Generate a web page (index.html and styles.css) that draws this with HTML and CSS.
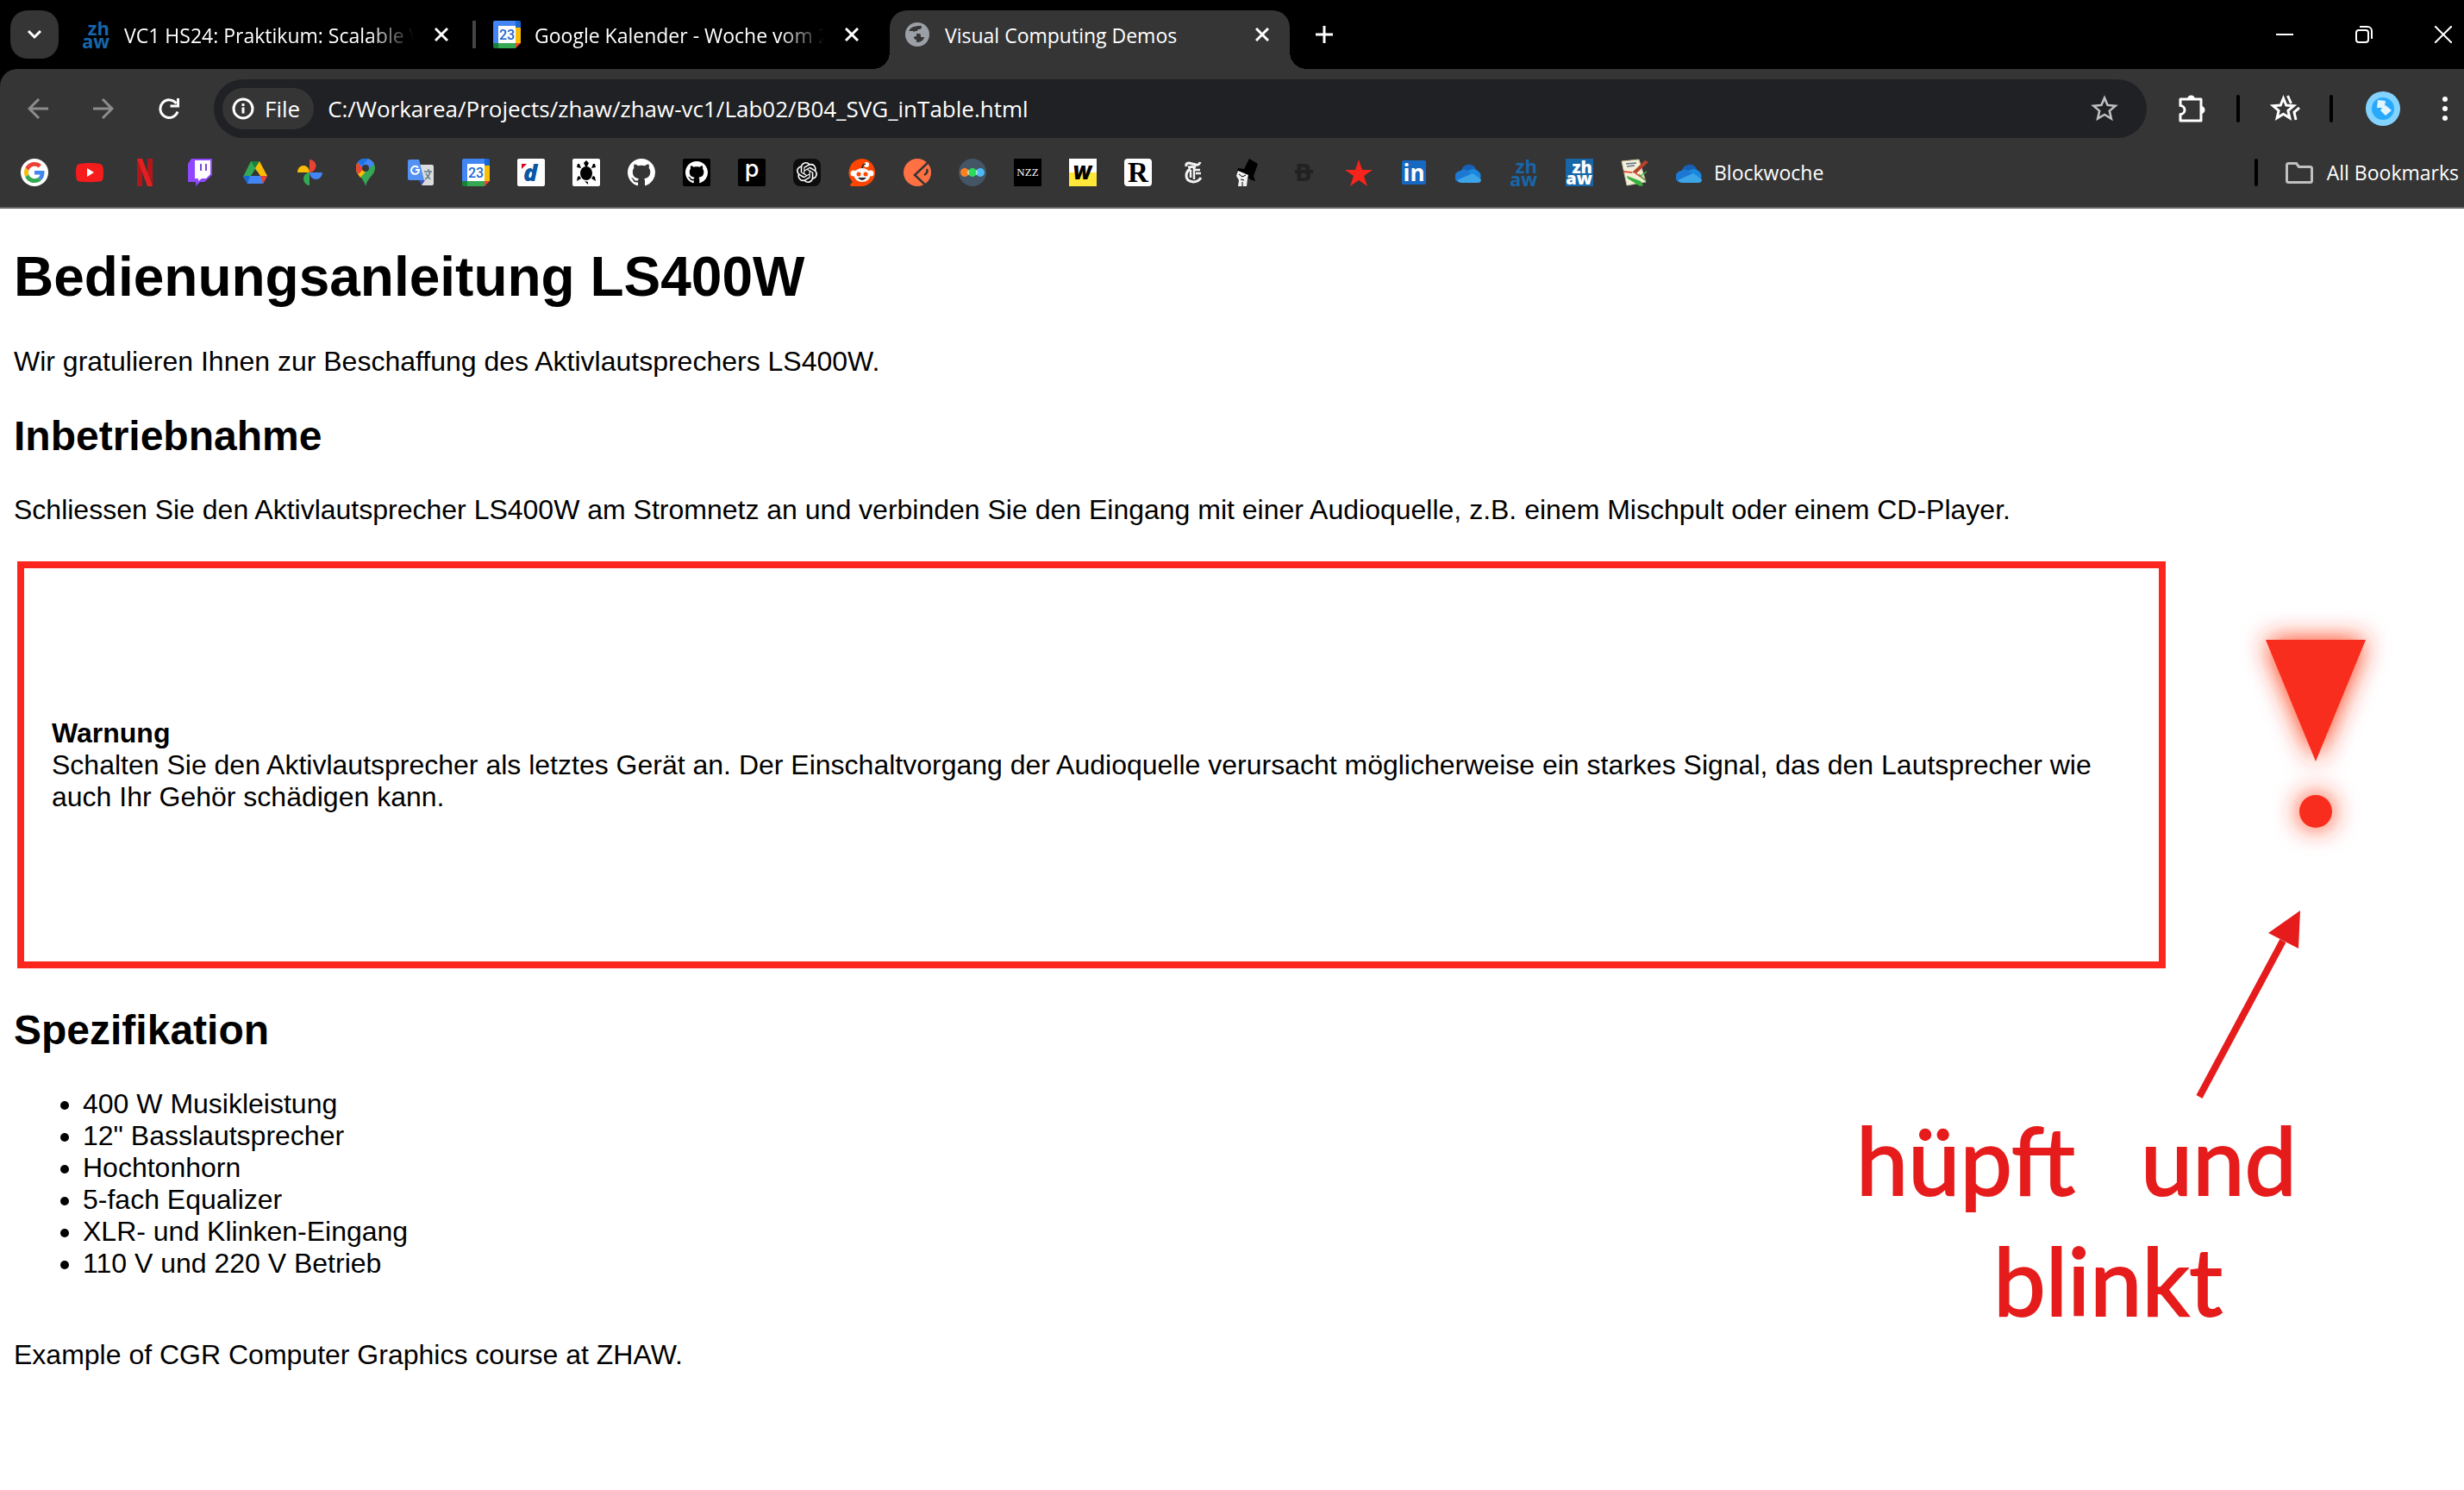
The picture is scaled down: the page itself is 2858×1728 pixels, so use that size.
FILE: index.html
```html
<!DOCTYPE html>
<html lang="de">
<head>
<meta charset="utf-8">
<title>Visual Computing Demos</title>
<link rel="stylesheet" href="styles.css">
</head>
<body>
<svg class="defs" aria-hidden="true">
  <defs>
    <symbol id="close" viewBox="0 0 16 16"><path d="M1 1l14 14M15 1L1 15" fill="none" stroke="#fff" stroke-width="3"/></symbol>
    <symbol id="calendar" viewBox="0 0 32 32">
      <path d="M2 0h24v8H8v18H0V2a2 2 0 012-2z" fill="#4285f4"/>
      <path d="M26 0h4a2 2 0 012 2v6h-6z" fill="#1967d2"/>
      <path d="M26 8h6v18h-6z" fill="#fbbc04"/>
      <path d="M6 26h20v6H6z" fill="#34a853"/>
      <path d="M0 26h6v6H2a2 2 0 01-2-2z" fill="#188038"/>
      <path d="M26 26h6l-6 6z" fill="#ea4335"/>
      <path d="M6 6h20v20H6z" fill="#fff"/>
      <text x="16" y="22" text-anchor="middle" font-family="Roboto, sans-serif" font-weight="500" font-size="16" fill="#1967d2">23</text>
    </symbol>
    <symbol id="zhaw" viewBox="0 0 32 32">
      <g font-family="Open Sans, sans-serif" font-weight="700" font-size="22" fill="#1766a8">
        <text x="31" y="17" text-anchor="end">zh</text>
        <text x="31" y="32" text-anchor="end">aw</text>
      </g>
    </symbol>
    <symbol id="onedrive" viewBox="0 0 32 32">
      <path d="M7 14a9 9 0 0117-2l-5 8z" fill="#1560b5"/>
      <path d="M7 28a7 7 0 01-1-14 7 7 0 018 0l9 6-12 8z" fill="#1d78d3"/>
      <path d="M14 14l3-1a8 8 0 0110 2 6.500 6.500 0 01-1 11z" fill="#1987df"/>
      <path d="M2 25l18-8 10 7a4 4 0 01-4 4H7a7 7 0 01-5-3z" fill="#3ba5e8"/>
    </symbol>
    <symbol id="octocat" viewBox="0 0 16 16"><path fill="#fff" d="M8 0C3.580 0 0 3.580 0 8c0 3.540 2.290 6.530 5.470 7.590.4.070.55-.17.55-.38 0-.19-.01-.82-.01-1.490-2.010.37-2.530-.49-2.690-.94-.09-.23-.48-.94-.82-1.130-.28-.15-.68-.52-.01-.53.63-.01 1.080.58 1.230.82.72 1.210 1.870.87 2.330.66.07-.52.28-.87.51-1.070-1.780-.2-3.640-.89-3.640-3.950 0-.87.31-1.590.82-2.150-.08-.2-.36-1.020.08-2.120 0 0 .67-.21 2.200.82.64-.18 1.320-.27 2-.27.68 0 1.360.09 2 .27 1.530-1.040 2.200-.82 2.200-.82.44 1.100.16 1.920.08 2.120.51.56.82 1.270.82 2.150 0 3.070-1.870 3.750-3.650 3.950.29.25.54.73.54 1.480 0 1.070-.01 1.930-.01 2.200 0 .21.15.46.55.38A8.013 8.013 0 0016 8c0-4.420-3.580-8-8-8z"/></symbol>
  </defs>
</svg>

<header class="browser">
  <div class="tabstrip">
    <button class="tab-search" aria-label="Search tabs"><svg width="20" height="12" viewBox="0 0 20 12"><path d="M3 2l7 7 7-7" fill="none" stroke="#fff" stroke-width="3"/></svg></button>
    <div class="tab">
      <svg class="icon" viewBox="0 0 32 32"><use href="#zhaw"/></svg>
      <span class="tab-title faded">VC1 HS24: Praktikum: Scalable V</span>
      <button class="tab-close" aria-label="Close tab"><svg width="16" height="16"><use href="#close"/></svg></button>
    </div>
    <span class="tab-gap line"></span>
    <div class="tab">
      <svg class="icon" viewBox="0 0 32 32"><use href="#calendar"/></svg>
      <span class="tab-title faded">Google Kalender - Woche vom 2</span>
      <button class="tab-close" aria-label="Close tab"><svg width="16" height="16"><use href="#close"/></svg></button>
    </div>
    <span class="tab-gap"></span>
    <div class="tab active">
      <svg class="icon" viewBox="0 0 32 32"><circle cx="16" cy="16" r="14" fill="#9aa0a6"/><path d="M17 6h4c0 3-1 4-3 4-1 0-2 0-2 2h-3v3h5c2 0 2 1 2 4h3c1 0 1 1 1 1-2 4-5 5-9 5v-3c-2 0-3-1-3-3v-2H5c0-5 3-9 7-10 2 0 3-1 5-1z" fill="#353535"/><path d="M5 12h6l4 3v3l-5 1-5-2z" fill="#9aa0a6"/></svg>
      <span class="tab-title">Visual Computing Demos</span>
      <button class="tab-close" aria-label="Close tab"><svg width="16" height="16"><use href="#close"/></svg></button>
    </div>
    <button class="new-tab" aria-label="New tab"><svg width="20" height="20"><path d="M10 0v20M0 10h20" stroke="#fff" stroke-width="3"/></svg></button>
    <div class="window-controls">
      <button aria-label="Minimize"><svg width="20" height="20"><path d="M0 10h20" stroke="#fff" stroke-width="2"/></svg></button>
      <button aria-label="Restore"><svg width="20" height="20" fill="none" stroke="#fff" stroke-width="2"><rect x="1" y="5" width="14" height="14" rx="3"/><path d="M5 1h9a5 5 0 015 5v9"/></svg></button>
      <button aria-label="Close"><svg width="20" height="20"><path d="M0 0l20 20M20 0L0 20" stroke="#fff" stroke-width="2"/></svg></button>
    </div>
  </div>

  <div class="toolbar">
    <div class="nav">
      <button aria-label="Back"><svg width="24" height="24" fill="none" stroke="#8c8c8c" stroke-width="3"><path d="M24 12H2M13 1L2 12l11 11"/></svg></button>
      <button aria-label="Forward"><svg width="24" height="24" fill="none" stroke="#8c8c8c" stroke-width="3"><path d="M0 12h22M11 1l11 11-11 11"/></svg></button>
      <button aria-label="Reload"><svg width="24" height="24" fill="none" stroke="#fff" stroke-width="3"><path d="M22 15.500A10.300 10.300 0 1120.500 6M22.500 0v9h-9"/></svg></button>
    </div>
    <form class="omnibox">
      <button type="button" class="chip"><svg width="26" height="26" fill="none" stroke="#fff" stroke-width="3"><circle cx="13" cy="13" r="11"/><path d="M13 11.500v7M13 7v3"/></svg>File</button>
      <input class="url" type="text" aria-label="Address" value="C:/Workarea/Projects/zhaw/zhaw-vc1/Lab02/B04_SVG_inTable.html">
      <button type="button" class="star" aria-label="Bookmark this page"><svg width="38" height="38" viewBox="0 0 24 24"><path fill="#c0c0c0" d="M22 9.240l-7.190-.62L12 2 9.190 8.630 2 9.240l5.460 4.730L5.820 21 12 17.270 18.180 21l-1.630-7.030L22 9.240zM12 15.400l-3.760 2.270 1-4.280-3.320-2.880 4.380-.38L12 6.100l1.710 4.040 4.380.38-3.320 2.880 1 4.280L12 15.400z"/></svg></button>
    </form>
    <div class="actions">
      <button aria-label="Extensions"><svg width="36" height="36"><path d="M5 7h24v25H5v-7.500a5 5 0 000-10z" fill="none" stroke="#fff" stroke-width="3" stroke-linejoin="round"/><path d="M13 7a4.500 4.500 0 019 0zM29 15a4.500 4.500 0 010 9z" fill="#fff"/></svg></button>
      <span class="divider"></span>
      <button aria-label="Bookmarks"><svg width="36" height="36" fill="none" stroke="#fff" stroke-width="3"><path d="M16.500 6l3.300 8 8.700.7-6.600 5.600 2 8.500-7.400-4.500-7.400 4.500 2-8.500-6.600-5.600 8.700-.7z"/><path d="M21.500 3l4 9M35 17l-6 5 2 9"/></svg></button>
      <span class="divider"></span>
      <button class="profile" aria-label="Profile"><svg width="40" height="40"><circle cx="20" cy="20" r="20" fill="#82d3ff"/><circle cx="20" cy="20" r="13" fill="#29a9fb"/><path d="M14 10l9 1-1 6 1-1 7 6-7 6-6-6 2-3h-6z" fill="#e2f4fd"/></svg></button>
      <button class="menu" aria-label="Menu"><svg width="8" height="30" fill="#fff"><circle cx="4" cy="4" r="3"/><circle cx="4" cy="15" r="3"/><circle cx="4" cy="26" r="3"/></svg></button>
    </div>
  </div>

  <nav class="bookmarks" aria-label="Bookmarks">
    <a href="#" aria-label="Google"><svg class="icon" viewBox="0 0 32 32"><circle cx="16" cy="16" r="16" fill="#fff"/><g transform="translate(4 4) scale(.5)"><path fill="#ea4335" d="M24 9.500c3.540 0 6.710 1.220 9.210 3.600l6.850-6.850C35.900 2.380 30.470 0 24 0 14.620 0 6.510 5.380 2.560 13.220l7.980 6.190C12.430 13.720 17.740 9.500 24 9.500z"/><path fill="#4285f4" d="M46.980 24.550c0-1.570-.15-3.090-.38-4.550H24v9.020h12.940c-.58 2.960-2.260 5.480-4.780 7.180l7.730 6c4.510-4.180 7.090-10.360 7.090-17.650z"/><path fill="#fbbc05" d="M10.530 28.590c-.48-1.450-.76-2.990-.76-4.590s.27-3.140.76-4.590l-7.980-6.190C.92 16.460 0 20.120 0 24c0 3.880.92 7.540 2.560 10.780l7.970-6.190z"/><path fill="#34a853" d="M24 48c6.480 0 11.930-2.130 15.890-5.810l-7.730-6c-2.150 1.450-4.920 2.300-8.160 2.300-6.260 0-11.570-4.220-13.470-9.910l-7.980 6.190C6.510 42.620 14.620 48 24 48z"/></g></svg></a>
    <a href="#" aria-label="YouTube"><svg class="icon" viewBox="0 0 32 32"><path d="M4 6q12-2 24 0 3 1 3.500 4 1 6 0 13-.5 3-3.500 3.500-12 1.500-24 0-3-.5-3.500-3.500-1-7 0-13Q1 6.500 4 6z" fill="#f61c1c"/><path d="M13 11v10l8-5z" fill="#fff"/></svg></a>
    <a href="#" aria-label="Netflix"><svg class="icon" viewBox="0 0 32 32"><path d="M7 0h6v32H7zM19 0h6v32h-6z" fill="#b1161b"/><path d="M7 0h6l12 32h-6z" fill="#e22020"/></svg></a>
    <a href="#" aria-label="Twitch"><svg class="icon" viewBox="0 0 32 32"><path d="M6 0h24v19l-9 8h-5l-5 5v-5H2V6z" fill="#9146ff"/><path d="M10 2h18v16l-5 5h-5l-4 3v-3h-4z" fill="#fff"/><path d="M16 6h2v8h-2zM22 6h2v8h-2z" fill="#7b4bd0"/></svg></a>
    <a href="#" aria-label="Drive"><svg class="icon" viewBox="0 0 32 32"><path d="M11 3h5l4 8-9 15-3 3-6-8z" fill="#34a853"/><path d="M11 3h10l-5 8z" fill="#188038"/><path d="M16 11l5-8 9 17h-8z" fill="#fbbc04"/><path d="M2 20h28l-5 9H7z" fill="#4285f4"/><path d="M2 20h8l-3 9z" fill="#1967d2"/><path d="M22 20h8l-5 9z" fill="#ea4335"/><path d="M16 12l5 8H11z" fill="#353535"/></svg></a>
    <a href="#" aria-label="Photos"><svg class="icon" viewBox="0 0 32 32"><path d="M15 16V1a7.500 7.500 0 010 15z" fill="#ea4335"/><path d="M15 16H1a7 8 0 0114 0z" fill="#fbbc04"/><path d="M15 16v15a7 7.500 0 010-15z" fill="#34a853"/><path d="M15 16h15a7.500 8 0 01-15 0z" fill="#4285f4"/></svg></a>
    <a href="#" aria-label="Maps"><svg class="icon" viewBox="0 0 32 32"><path d="M16 0C9 0 5 5 5 11c0 8 9 11 11 21 2-10 11-13 11-21 0-6-5-11-11-11z" fill="#34a853"/><path d="M5 11c0 5 3 8 5 11L25 5c-1-2-4-5-9-5C9 0 5 5 5 11z" fill="#fbbc04"/><path d="M5 11c0-3 1-5 2-7l8 6-7 8c-2-2-3-4-3-7z" fill="#ea4335"/><path d="M7 4c3-4 7-4 9-4 4 0 8 2 10 6L16 16z" fill="#4285f4"/><path d="M7 4l5 4 7-8C14-1 9 1 7 4z" fill="#1a73e8"/><circle cx="16" cy="11" r="4" fill="#353535"/></svg></a>
    <a href="#" aria-label="Translate"><svg class="icon" viewBox="0 0 32 32"><path d="M14 7h15a2 2 0 012 2v20a2 2 0 01-2 2H17z" fill="#dcdcdc"/><path d="M3 1h11l6 24H3a2 2 0 01-2-2V3a2 2 0 012-2z" fill="#5491f5"/><path d="M14 25h7l-4 6z" fill="#3f51b5"/><path d="M20 15h9M25 12v3M27 15q-2 7-6 9M22 17q2 4 5 7" fill="none" stroke="#607d8b" stroke-width="1.500"/><path d="M13 10.500A4.500 4.500 0 1014 13h-4" fill="none" stroke="#fff" stroke-width="2"/></svg></a>
    <a href="#" aria-label="Calendar"><svg class="icon" viewBox="0 0 32 32"><use href="#calendar"/></svg></a>
    <a href="#" aria-label="Digitec"><svg class="icon" viewBox="0 0 32 32"><rect width="32" height="32" rx="2" fill="#fff"/><path d="M5 6h6l-6 6z" fill="#e3001b"/><text x="7" y="26" font-family="Open Sans, sans-serif" font-weight="800" font-style="italic" font-size="27" fill="#0b57a3">d</text></svg></a>
    <a href="#" aria-label="Turtle"><svg class="icon" viewBox="0 0 32 32"><rect width="32" height="32" rx="2" fill="#fff"/><ellipse cx="16" cy="17" rx="7" ry="8" fill="#000"/><path d="M15 9l-2-4 3-3 3 3-2 4zM10 11L5 10l1-4h2zM22 11l5-1-1-4h-2zM10 23l-5 3 1-5 2-1zM22 23l5 3-1-5-2-1zM14 26l4 1v3z" fill="#000"/></svg></a>
    <a href="#" aria-label="GitHub"><svg class="icon" viewBox="0 0 32 32"><use href="#octocat" width="32" height="32"/></svg></a>
    <a href="#" aria-label="GitHub Enterprise"><svg class="icon" viewBox="0 0 32 32"><rect width="32" height="32" rx="2"/><use href="#octocat" x="3" y="3" width="26" height="26"/></svg></a>
    <a href="#" aria-label="P"><svg class="icon" viewBox="0 0 32 32"><rect width="32" height="32" rx="2"/><text x="16" y="21" text-anchor="middle" font-family="Inter, sans-serif" font-weight="500" font-size="27" fill="#fff">p</text></svg></a>
    <a href="#" aria-label="ChatGPT"><svg class="icon" viewBox="0 0 32 32"><rect width="32" height="32" rx="8" fill="#0d0d0d"/><path transform="translate(4 4)" fill="#fff" d="M22.2819 9.8211a5.9847 5.9847 0 0 0-.5157-4.9108 6.0462 6.0462 0 0 0-6.5098-2.9A6.0651 6.0651 0 0 0 4.9807 4.1818a5.9847 5.9847 0 0 0-3.9977 2.9 6.0462 6.0462 0 0 0 .7427 7.0966 5.98 5.98 0 0 0 .511 4.9107 6.051 6.051 0 0 0 6.5146 2.9001A5.9847 5.9847 0 0 0 13.2599 24a6.0557 6.0557 0 0 0 5.7718-4.2058 5.9894 5.9894 0 0 0 3.9977-2.9001 6.0557 6.0557 0 0 0-.7475-7.0729zm-9.022 12.6081a4.4755 4.4755 0 0 1-2.8764-1.0408l.1419-.0804 4.7783-2.7582a.7948.7948 0 0 0 .3927-.6813v-6.7369l2.02 1.1686a.071.071 0 0 1 .038.052v5.5826a4.504 4.504 0 0 1-4.4945 4.4944zm-9.6607-4.1254a4.4708 4.4708 0 0 1-.5346-3.0137l.142.0852 4.783 2.7582a.7712.7712 0 0 0 .7806 0l5.8428-3.3685v2.3324a.0804.0804 0 0 1-.0332.0615L9.74 19.9502a4.4992 4.4992 0 0 1-6.1408-1.6464zM2.3408 7.8956a4.485 4.485 0 0 1 2.3655-1.9728V11.6a.7664.7664 0 0 0 .3879.6765l5.8144 3.3543-2.0201 1.1685a.0757.0757 0 0 1-.071 0l-4.8303-2.7865A4.504 4.504 0 0 1 2.3408 7.872zm16.5963 3.8558L13.1038 8.364 15.1192 7.2a.0757.0757 0 0 1 .071 0l4.8303 2.7913a4.4944 4.4944 0 0 1-.6765 8.1042v-5.6772a.79.79 0 0 0-.407-.667zm2.0107-3.0231l-.142-.0852-4.7735-2.7818a.7759.7759 0 0 0-.7854 0L9.409 9.2297V6.8974a.0662.0662 0 0 1 .0284-.0615l4.8303-2.7866a4.4992 4.4992 0 0 1 6.6802 4.66zM8.3065 12.863l-2.02-1.1638a.0804.0804 0 0 1-.038-.0567V6.0742a4.4992 4.4992 0 0 1 7.3757-3.4537l-.142.0805L8.704 5.459a.7948.7948 0 0 0-.3927.6813zm1.0976-2.3654l2.602-1.4998 2.6069 1.4998v2.9994l-2.5974 1.4997-2.6067-1.4997Z"/></svg></a>
    <a href="#" aria-label="Reddit"><svg class="icon" viewBox="0 0 32 32"><path d="M16 0a16 16 0 11-2 32H3l-1-2 3-3A16 16 0 0116 0z" fill="#ff4500"/><ellipse cx="16" cy="19" rx="9.500" ry="8" fill="#f4f8fb"/><circle cx="6" cy="17" r="3.500" fill="#fff"/><circle cx="26" cy="17" r="3.500" fill="#fff"/><circle cx="21" cy="7" r="3" fill="#fff"/><path d="M16 11q0-4 4-5" fill="none" stroke="#222" stroke-width="1.500"/><circle cx="12" cy="18" r="2.500" fill="#ff4500"/><circle cx="20" cy="18" r="2.500" fill="#ff4500"/><path d="M11 22h10q-5 6-10 0z" fill="#222"/></svg></a>
    <a href="#" aria-label="Reader"><svg class="icon" viewBox="0 0 32 32"><circle cx="16" cy="16" r="16" fill="#ff7143"/><path d="M30 3L13 19l14 13" fill="none" stroke="#353535" stroke-width="2.500"/><path d="M27 12q2 4-3 7" fill="none" stroke="#353535" stroke-width="2.500"/></svg></a>
    <a href="#" aria-label="Letterboxd"><svg class="icon" viewBox="0 0 32 32"><circle cx="16" cy="16" r="16" fill="#445566"/><circle cx="7" cy="16" r="5" fill="#ff8021"/><circle cx="25" cy="16" r="5" fill="#4cbaf3"/><circle cx="16" cy="16" r="5" fill="#2ddb5b"/><path d="M11.500 13.500q-1.500 2.500 0 5M20.500 13.500q1.500 2.500 0 5" fill="none" stroke="#fff"/></svg></a>
    <a href="#" aria-label="NZZ"><svg class="icon" viewBox="0 0 32 32"><rect width="32" height="32"/><text x="16" y="20" text-anchor="middle" font-family="Liberation Serif, serif" font-size="13" fill="#fff">NZZ</text></svg></a>
    <a href="#" aria-label="W"><svg class="icon" viewBox="0 0 32 32"><rect width="32" height="32" fill="#fff"/><rect y="16" width="32" height="16" fill="#ffe83a"/><text x="15" y="24" text-anchor="middle" font-family="Inter, sans-serif" font-weight="900" font-style="italic" font-size="21" fill="#000">W</text></svg></a>
    <a href="#" aria-label="Republik"><svg class="icon" viewBox="0 0 32 32"><rect width="32" height="32" rx="4" fill="#fff"/><text x="16" y="27" text-anchor="middle" font-family="Liberation Serif, serif" font-weight="700" font-size="33" fill="#000">R</text></svg></a>
    <a href="#" aria-label="New York Times"><svg class="icon" viewBox="0 0 32 32" fill="none" stroke="#f2f2f2"><path d="M8 9q-1-4 3-4l8 2q4 1 5-3M10 10q4-1 9 0" stroke-width="3"/><path d="M13 12q-5 2-5 8t8 7q6 0 9-5" stroke-width="3"/><path d="M17 10v14M13 13v9M18 13h6M19 17h6" stroke-width="2.500"/></svg></a>
    <a href="#" aria-label="Hat"><svg class="icon" viewBox="0 0 32 32"><path d="M17 0l10 6-5 14 2 6-4-1L3 14l1-3 7 1z" fill="#000"/><path d="M4 14l5 2 7 3-1 4-1 9H4l1-7-3-5z" fill="#f2f2f2"/><path d="M5 18l4 3 4-2M7 24l4 1M9 27v5" fill="none" stroke="#000"/></svg></a>
    <a href="#" aria-label="B"><svg class="icon" viewBox="0 0 32 32"><text x="16" y="26" text-anchor="middle" font-family="Inter, sans-serif" font-weight="800" font-size="27" fill="#222">B</text><path d="M6 15h21" stroke="#222" stroke-width="4"/></svg></a>
    <a href="#" aria-label="Star"><svg class="icon" viewBox="0 0 32 32"><path d="M16 1l4 12h12l-10 7 4 12-10-7-10 7 4-12L0 13h12z" fill="#f7241b"/></svg></a>
    <a href="#" aria-label="LinkedIn"><svg class="icon" viewBox="0 0 32 32"><rect x="2" y="2" width="28" height="28" rx="2" fill="#1768c1"/><text x="16" y="26" text-anchor="middle" font-family="Open Sans, sans-serif" font-weight="700" font-size="26" fill="#fff">in</text></svg></a>
    <a href="#" aria-label="OneDrive"><svg class="icon" viewBox="0 0 32 32"><use href="#onedrive"/></svg></a>
    <a href="#" aria-label="ZHAW"><svg class="icon" viewBox="0 0 32 32"><use href="#zhaw"/></svg></a>
    <a href="#" aria-label="ZHAW Moodle"><svg class="icon" viewBox="0 0 32 32"><rect width="32" height="32" fill="#1766a8"/><g font-family="Open Sans, sans-serif" font-weight="800" font-size="20" fill="#fff"><text x="31" y="17" text-anchor="end">zh</text><text x="31" y="30" text-anchor="end">aw</text></g></svg></a>
    <a href="#" aria-label="Editor"><svg class="icon" viewBox="0 0 32 32"><path d="M1 3l20-2 8 26-22 4z" fill="#f4efd8" stroke="#c9c2a0"/><path d="M3 15l10 1M17 17l12 8" stroke="#e02b20" stroke-width="1.500"/><path d="M6 6l12-1M7 9l9-1" stroke="#5d7389" stroke-width="1.500"/><path d="M13 16L28 2l4 2-14 13z" fill="#b6422b"/><path d="M7 20l16 6 3 5-4 1-14-9z" fill="#37b03c"/><path d="M21 18l8 8M30 15l-7 5" stroke="#46b54b" stroke-width="1.500"/></svg></a>
    <a href="#"><svg class="icon" viewBox="0 0 32 32"><use href="#onedrive"/></svg>Blockwoche</a>
    <span class="spacer"></span>
    <span class="divider"></span>
    <a href="#" class="all"><svg class="icon" viewBox="0 0 32 32"><path d="M3.500 5.500h9l3 4h13q2 0 2 2v14q0 2-2 2h-25q-2 0-2-2v-18q0-2 2-2z" fill="none" stroke="#c0c0c0" stroke-width="3"/></svg>All Bookmarks</a>
  </nav>
</header>

<main class="page">
  <h1>Bedienungsanleitung LS400W</h1>
  <p>Wir gratulieren Ihnen zur Beschaffung des Aktivlautsprechers LS400W.</p>
  <h2>Inbetriebnahme</h2>
  <p>Schliessen Sie den Aktivlautsprecher LS400W am Stromnetz an und verbinden Sie den Eingang mit einer Audioquelle, z.B. einem Mischpult oder einem CD-Player.</p>

  <section class="warning">
    <div class="warning-box">
      <div><strong>Warnung</strong><br>Schalten Sie den Aktivlautsprecher als letztes Gerät an. Der Einschaltvorgang der Audioquelle verursacht möglicherweise ein starkes Signal, das den Lautsprecher wie auch Ihr Gehör schädigen kann.</div>
    </div>
    <svg class="exclamation" width="300" height="320" viewBox="0 0 300 320" role="img" aria-label="Achtung">
      <defs><filter id="glow" x="-1" y="-1" width="3" height="3"><feGaussianBlur stdDeviation="15"/></filter></defs>
      <g fill="#ff2a0c" filter="url(#glow)"><path d="M92 15h116l-58 141z"/><circle cx="150" cy="214" r="19"/></g>
      <g fill="#f92d1d"><path d="M92 15h116l-58 141z"/><circle cx="150" cy="214" r="19"/></g>
    </svg>
  </section>

  <h2>Spezifikation</h2>
  <ul>
    <li>400 W Musikleistung</li>
    <li>12" Basslautsprecher</li>
    <li>Hochtonhorn</li>
    <li>5-fach Equalizer</li>
    <li>XLR- und Klinken-Eingang</li>
    <li>110 V und 220 V Betrieb</li>
  </ul>
  <footer>Example of CGR Computer Graphics course at ZHAW.</footer>

  <aside class="note">
    <svg class="arrow" width="124" height="222" viewBox="0 0 124 222"><path d="M7 216L104 35" stroke="#e61c1c" stroke-width="8"/><path d="M124 0l-2 44-35-18z" fill="#e61c1c"/></svg>
    <div class="note-line first"><span>hüpft</span><span>und</span></div>
    <div class="note-line second">blinkt</div>
  </aside>
</main>
</body>
</html>
```

FILE: styles.css
```css
* { box-sizing: border-box; }
body { margin: 0; background: #fff; color: #000; font: 32px/37px "Liberation Sans", Arial, sans-serif; }
button { display: flex; align-items: center; justify-content: center; margin: 0; padding: 0; border: 0; background: none; color: inherit; font: inherit; }
svg { display: block; flex: none; }
.defs { position: absolute; width: 0; height: 0; }
.icon { width: 32px; height: 32px; }

/* Browser frame */
.browser { background: #000; color: #fff; font: 23px/32px "Open Sans", "Segoe UI", sans-serif; border-bottom: 2px solid #666; }
.tabstrip { display: flex; align-items: center; height: 80px; padding-left: 12px; }
.tab-search { width: 56px; height: 56px; margin-right: 12px; border-radius: 20px; background: #353535; }
.tab { display: flex; align-items: center; gap: 16px; flex: 0 1 464px; min-width: 0; height: 68px; margin-top: 12px; padding: 0 24px 12px 16px; }
.tab-title { flex: 1; min-width: 0; margin-right: 8px; padding-top: 2px; overflow: hidden; white-space: nowrap; }
.faded { -webkit-mask-image: linear-gradient(90deg, #000 calc(100% - 52px), transparent); mask-image: linear-gradient(90deg, #000 calc(100% - 52px), transparent); }
.tab-close { width: 16px; height: 16px; }
.tab-gap { flex: none; width: 12px; height: 32px; }
.line { background: linear-gradient(#444, #444) center / 4px 100% no-repeat; }
.active { position: relative; background: #353535; border-radius: 20px 20px 0 0; }
.active::before, .active::after { content: ""; position: absolute; bottom: 0; width: 20px; height: 20px; }
.active::before { right: 100%; background: radial-gradient(circle at 0 0, transparent 20px, #353535 20px); }
.active::after { left: 100%; background: radial-gradient(circle at 100% 0, transparent 20px, #353535 20px); }
.new-tab { width: 56px; height: 56px; margin-left: 12px; }
.window-controls { display: flex; gap: 72px; margin-left: auto; padding-right: 14px; }

.toolbar { display: flex; align-items: center; gap: 40px; height: 92px; padding: 0 18px 0 32px; background: #353535; border-radius: 20px 0 0 0; }
.nav { display: flex; gap: 52px; }
.omnibox { display: flex; align-items: center; flex: 1; height: 68px; padding: 0 30px 0 10px; border-radius: 34px; background: #202124; font-size: 26px; }
.chip { gap: 12px; height: 48px; padding: 0 16px 0 11px; border-radius: 24px; background: #353535; }
.url { flex: 1; min-width: 0; margin: 0 16px; padding: 0; border: 0; background: none; color: #fff; font: inherit; }
.actions { display: flex; align-items: center; gap: 34px; margin-left: -6px; }
.divider { flex: none; width: 4px; height: 32px; border-radius: 2px; background: #000; }
.actions .profile { margin-left: 4px; }
.actions .menu { margin-left: 14px; }

.bookmarks { display: flex; align-items: center; gap: 32px; height: 68px; padding: 0 6px 12px 24px; background: #353535; }
.bookmarks a { display: flex; align-items: center; gap: 12px; color: #fff; text-decoration: none; white-space: nowrap; }
.bookmarks .all { gap: 16px; }
.spacer { flex: 1; }

/* Document */
.page { position: relative; padding: 43px 16px 16px; }
h1 { margin: 0 0 43px; font-size: 64px; line-height: 73px; }
h2 { margin: 40px 0; font-size: 48px; line-height: 55px; }
p { margin: 0; }
.warning { display: flex; align-items: center; margin: 41px 6px 44px 4px; }
.warning-box { display: flex; align-items: center; flex: 1; min-height: 472px; padding: 0 32px; border: 8px solid #fb261d; }
.exclamation { margin-left: 24px; overflow: visible; }
ul { margin: 0; padding: 0 0 0 80px; }
footer { margin-top: 69px; }

/* Marker note pointing at the exclamation mark */
.note { position: absolute; top: 814px; right: 190px; display: flex; flex-direction: column; align-items: flex-end; color: #e61c1c; font: 108px/140px Lato, sans-serif; -webkit-text-stroke: 2px #e61c1c; }
.note-line { display: flex; }
.first { gap: 76px; margin-right: 4px; margin-top: -4px; }
.second { margin-right: 90px; }
```
